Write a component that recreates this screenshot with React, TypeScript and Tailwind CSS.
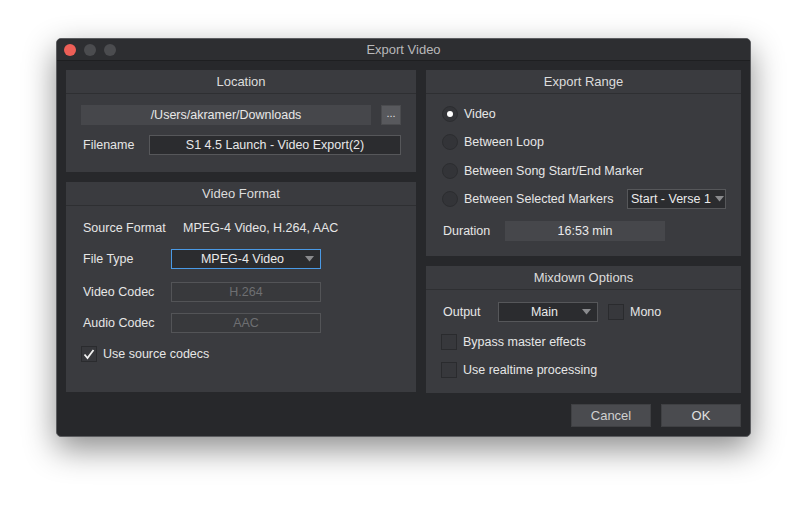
import React from "react";

const Arrow = () => (
  <svg width="9" height="6" viewBox="0 0 9 6" className="shrink-0">
    <path d="M0 0 L9 0 L4.5 5.5 Z" fill="#8a8b8e" />
  </svg>
);

const Panel = ({ title, className, children }: { title: string; className?: string; children: React.ReactNode }) => (
  <div className={"flex flex-col bg-[#3a3b3f] " + (className ?? "")}>
    <div className="h-[24px] shrink-0 flex items-center justify-center border-b border-[#2e2f32] text-[13px] text-[#dcdcdc]">{title}</div>
    {children}
  </div>
);

const Radio = ({ on }: { on?: boolean }) => (
  <div className="w-[16px] h-[16px] rounded-full border border-[#2c2d30] bg-[#333438] flex items-center justify-center shrink-0">
    {on && <div className="w-[6px] h-[6px] rounded-full bg-white" />}
  </div>
);

const Check = ({ on }: { on?: boolean }) => (
  <div className="w-[16px] h-[16px] border border-[#2a2b2e] bg-[#37383c] flex items-center justify-center shrink-0">
    {on && (
      <svg width="12" height="11" viewBox="0 0 12 11">
        <path d="M1.5 5.5 L4.5 9 L10.5 1" fill="none" stroke="#f0f0f0" strokeWidth="1.8" />
      </svg>
    )}
  </div>
);

export default function App() {
  return (
    <div
      className="w-[807px] h-[512px] bg-white pl-[56px] pt-[38px] text-[12.5px] text-[#e6e6e6]"
      style={{ fontFamily: '"Liberation Sans", Arial, sans-serif' }}
    >
      <div className="w-[695px] h-[399px] rounded-[5px] border border-[#5c5d60] bg-[#27282b] shadow-[0_12px_32px_rgba(0,0,0,0.45)] flex flex-col overflow-hidden">
        {/* title bar */}
        <div className="h-[22px] bg-[#2d2e31] border-b border-[#1e1f21] flex items-center relative">
          <div className="flex gap-[8px] pl-[7px] items-center">
            <div className="w-[12px] h-[12px] rounded-full bg-[#ed5f57]" />
            <div className="w-[12px] h-[12px] rounded-full bg-[#4b4c4f]" />
            <div className="w-[12px] h-[12px] rounded-full bg-[#4b4c4f]" />
          </div>
          <div className="absolute inset-0 flex items-center justify-center text-[13px] text-[#b8b8ba]">Export Video</div>
        </div>
        {/* body */}
        <div className="flex-1 flex flex-col pt-[9px] px-[9px]">
          <div className="flex gap-[10px]">
            {/* left column */}
            <div className="w-[350px] flex flex-col gap-[10px]">
              <Panel title="Location" className="h-[102px]">
                <div className="px-[15px] pt-[11px] flex flex-col gap-[10px]">
                  <div className="flex gap-[10px]">
                    <div className="w-[290px] h-[20px] bg-[#46474b] flex items-center justify-center text-[#e8e8e8]">/Users/akramer/Downloads</div>
                    <div className="w-[20px] h-[20px] bg-[#58595d] border border-[#4a4b4e] flex items-center justify-center text-[11px] text-[#e0e0e0] leading-none pb-[3px]">...</div>
                  </div>
                  <div className="flex items-center">
                    <div className="w-[68px] pl-[2px]">Filename</div>
                    <div className="w-[252px] h-[20px] bg-[#2b2c2f] border border-[#56575a] flex items-center justify-center text-[#e8e8e8]">S1 4.5 Launch - Video Export(2)</div>
                  </div>
                </div>
              </Panel>
              <Panel title="Video Format" className="h-[210px]">
                <div className="px-[17px] pt-[14px] flex flex-col">
                  <div className="flex items-center h-[16px]">
                    <div className="w-[100px]">Source Format</div>
                    <div>MPEG-4 Video, H.264, AAC</div>
                  </div>
                  <div className="flex items-center mt-[13px]">
                    <div className="w-[88px]">File Type</div>
                    <div className="w-[150px] h-[20px] bg-[#2b2c2f] border border-[#4a9ae6] flex items-center pl-[8px] pr-[6px]">
                      <div className="flex-1 text-center text-[#eaeaea]">MPEG-4 Video</div>
                      <Arrow />
                    </div>
                  </div>
                  <div className="flex items-center mt-[13px]">
                    <div className="w-[88px]">Video Codec</div>
                    <div className="w-[150px] h-[20px] border border-[#535457] bg-[#38393c] flex items-center justify-center text-[#6e6f72]">H.264</div>
                  </div>
                  <div className="flex items-center mt-[11px]">
                    <div className="w-[88px]">Audio Codec</div>
                    <div className="w-[150px] h-[20px] border border-[#535457] bg-[#38393c] flex items-center justify-center text-[#6e6f72]">AAC</div>
                  </div>
                  <div className="flex items-center h-[16px] mt-[13px] -ml-[2px] gap-[6px]">
                    <Check on />
                    <div>Use source codecs</div>
                  </div>
                </div>
              </Panel>
            </div>
            {/* right column */}
            <div className="w-[315px] flex flex-col gap-[10px]">
              <Panel title="Export Range" className="h-[186px]">
                <div className="pl-[16px] pt-[12px] flex flex-col">
                  <div className="flex items-center gap-[6px] h-[16px]">
                    <Radio on />
                    <div>Video</div>
                  </div>
                  <div className="flex items-center gap-[6px] h-[16px] mt-[12px]">
                    <Radio />
                    <div>Between Loop</div>
                  </div>
                  <div className="flex items-center gap-[6px] h-[16px] mt-[13px]">
                    <Radio />
                    <div>Between Song Start/End Marker</div>
                  </div>
                  <div className="flex items-center h-[20px] mt-[10px]">
                    <div className="flex items-center gap-[6px] w-[185px]">
                      <Radio />
                      <div>Between Selected Markers</div>
                    </div>
                    <div className="w-[99px] h-[20px] border border-[#56575a] bg-[#2b2c2f] flex items-center pl-[3px] pr-[4px] gap-[4px]">
                      <div className="flex-1 text-[#eaeaea] whitespace-nowrap">Start - Verse 1</div>
                      <Arrow />
                    </div>
                  </div>
                  <div className="flex items-center mt-[12px] pl-[1px]">
                    <div className="w-[62px]">Duration</div>
                    <div className="w-[160px] h-[20px] bg-[#46474b] flex items-center justify-center text-[#eaeaea]">16:53 min</div>
                  </div>
                </div>
              </Panel>
              <Panel title="Mixdown Options" className="h-[127px]">
                <div className="pl-[15px] pt-[12px] flex flex-col">
                  <div className="flex items-center h-[20px]">
                    <div className="w-[57px] pl-[2px]">Output</div>
                    <div className="w-[100px] h-[20px] border border-[#56575a] bg-[#2b2c2f] flex items-center pl-[8px] pr-[6px]">
                      <div className="flex-1 text-center text-[#eaeaea]">Main</div>
                      <Arrow />
                    </div>
                    <div className="ml-[10px] flex items-center gap-[6px]">
                      <Check />
                      <div>Mono</div>
                    </div>
                  </div>
                  <div className="flex items-center h-[16px] gap-[6px] mt-[12px]">
                    <Check />
                    <div>Bypass master effects</div>
                  </div>
                  <div className="flex items-center h-[16px] gap-[6px] mt-[12px]">
                    <Check />
                    <div>Use realtime processing</div>
                  </div>
                </div>
              </Panel>
            </div>
          </div>
          <div className="flex justify-end gap-[10px] mt-[11px]">
            <div className="w-[80px] h-[23px] bg-[#4a4b4f] border border-[#3f4043] flex items-center justify-center text-[13px] text-[#d0d0d0]">Cancel</div>
            <div className="w-[80px] h-[23px] bg-[#4a4b4f] border border-[#3f4043] flex items-center justify-center text-[13px] text-[#e0e0e0]">OK</div>
          </div>
        </div>
      </div>
    </div>
  );
}
